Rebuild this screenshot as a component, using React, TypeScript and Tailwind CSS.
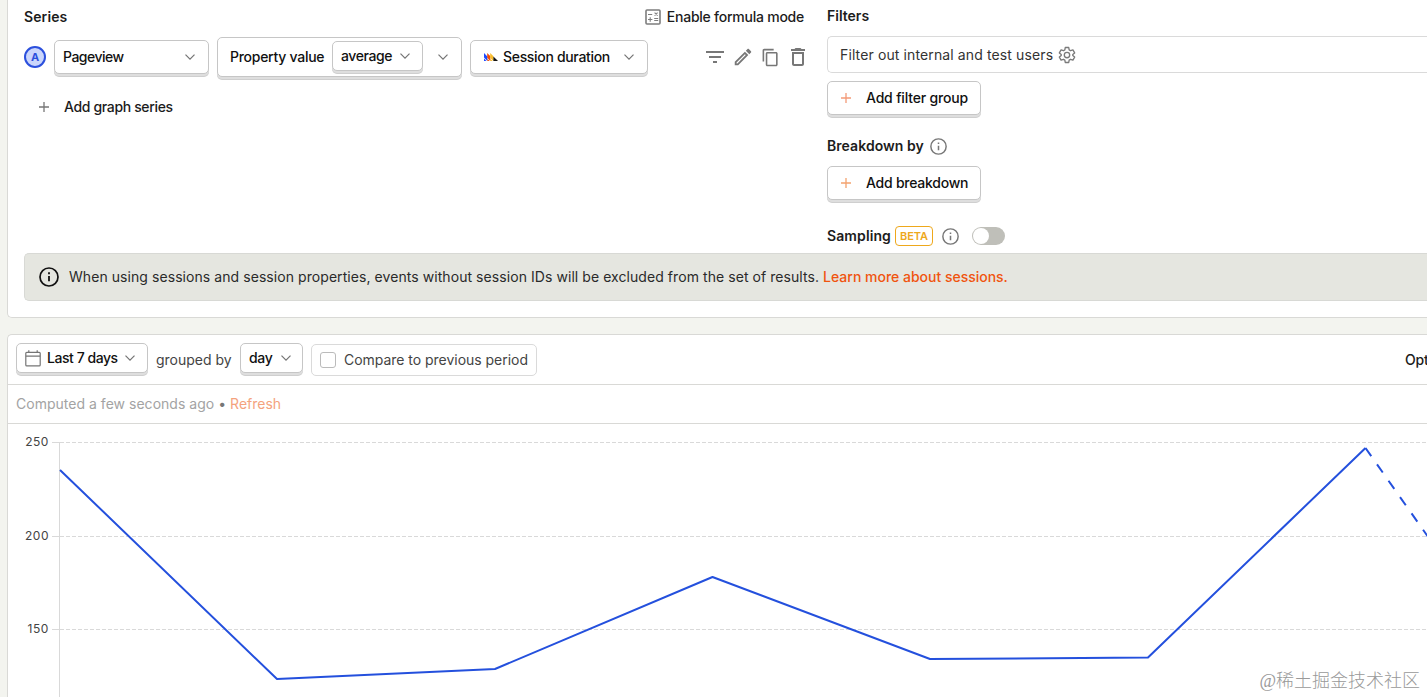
import React from "react";
import {
  MdContentCopy,
  MdFilterList,
  MdOutlineDelete,
  MdOutlineEdit,
} from "react-icons/md";

const POINTS = [
  [52, 46],
  [269, 255],
  [487, 245],
  [704.5, 153],
  [922, 235],
  [1140, 233.5],
  [1357.5, 24],
];

const TICKS = [
  { label: "250", y: 18.5 },
  { label: "200", y: 112.5 },
  { label: "150", y: 205.5 },
];

interface IconProps {
  className?: string;
}

const Chevron: React.FC<IconProps> = ({ className = "" }) => (
  <svg
    viewBox="0 0 10 6"
    className={`w-[10px] h-[6px] shrink-0 ${className}`}
    fill="none"
    stroke="#747474"
    strokeWidth="1.2"
  >
    <path d="M0.5 0.6 5 5.1 9.5 0.6" />
  </svg>
);

const Plus: React.FC<IconProps> = ({ className = "" }) => (
  <svg
    viewBox="0 0 10 10"
    className={`w-[10px] h-[10px] shrink-0 ${className}`}
    fill="none"
    stroke="currentColor"
    strokeWidth="1.3"
  >
    <path d="M5 0V10M0 5H10" />
  </svg>
);

const Info: React.FC<IconProps> = ({ className = "" }) => (
  <svg viewBox="0 0 20 20" className={`shrink-0 ${className}`} fill="none">
    <circle cx="10" cy="10" r="9" stroke="currentColor" strokeWidth="1.7" />
    <path d="M10 9v5.3M10 5.3v1.9" stroke="currentColor" strokeWidth="1.8" />
  </svg>
);

const Calculator = () => (
  <svg
    viewBox="0 0 16 16"
    className="w-4 h-4 shrink-0"
    fill="none"
    stroke="#7d7d7d"
  >
    <rect x="1" y="1" width="14" height="14" rx="1" strokeWidth="1.6" />
    <path
      d="M3 5.5h4.2M9.6 3.7l3 3M12.6 3.7l-3 3M3 10.5h4.4M5.2 8.3v4.4M9.2 9.5h4M9.2 11.5h4"
      strokeWidth="1.1"
    />
  </svg>
);

const Gear = () => (
  <svg
    viewBox="0 0 24 24"
    className="w-[18px] h-[18px] shrink-0"
    fill="none"
    stroke="#7a7a7a"
    strokeWidth="1.8"
    strokeLinejoin="round"
  >
    <path d="M9.7 2h4.6l.6 3.2 1.9 1.1 3.1-1.1 2.3 4-2.5 2.1v1.4l2.5 2.1-2.3 4-3.1-1.1-1.9 1.1-.6 3.2H9.7l-.6-3.2-1.9-1.1-3.1 1.1-2.3-4 2.5-2.1v-1.4L1.8 9.2l2.3-4 3.1 1.1 1.9-1.1z" />
    <circle cx="12" cy="12" r="3.6" />
  </svg>
);

const Calendar = () => (
  <svg
    viewBox="0 0 16 17"
    className="w-4 h-[17px] shrink-0"
    fill="none"
    stroke="#757575"
    strokeWidth="1.2"
  >
    <rect x="0.8" y="2.3" width="14.4" height="13.6" rx="1" />
    <path d="M0.8 6.1h14.4M3.8 0.2v2.4M12.2 0.2v2.4" />
  </svg>
);

const HogLogo = () => (
  <svg viewBox="0 0 14 8" className="w-[14px] h-2 shrink-0">
    <path d="M0 0l3.4 3.4V8L0 4.6zM0 5.6 2.4 8H0z" fill="#1d4aff" />
    <path d="M3.2 0l3.2 3.2V8L3.2 4.8zM3.4 5.8 5.6 8H3.4z" fill="#f54e00" />
    <path d="M6.2 0l3.2 3.2V8L6.2 4.8zM6.4 5.8 8.6 8H6.4z" fill="#f9bd2b" />
    <path d="M9.4 3.4 14 8H9.4z" fill="#151515" />
  </svg>
);

interface ButtonProps {
  className?: string;
  children: React.ReactNode;
}

const Button: React.FC<ButtonProps> = ({ className = "", children }) => (
  <div
    className={`flex items-center shrink-0 bg-white border border-[#c6c6c6] rounded-[5px] font-medium text-[#111] whitespace-nowrap shadow-[0_2px_0_#dedede,0_3px_0_#cfcfcf] ${className}`}
  >
    {children}
  </div>
);

const Series = () => (
  <div className="w-[803px] shrink-0">
    <div className="flex justify-between items-center h-[34px] pr-[23px]">
      <span className="font-semibold tracking-[0.1px]">Series</span>
      <div className="flex items-center gap-[6px] font-medium">
        <Calculator />
        <span className="tracking-[-0.24px]">Enable formula mode</span>
      </div>
    </div>
    <div className="flex items-center h-[46px]">
      <div className="w-[22px] h-[22px] rounded-full border-2 border-[#2c50dd] bg-[#cbd6fb] text-[#2c50dd] text-[11px] font-bold flex items-center justify-center">
        A
      </div>
      <Button className="ml-2 w-[155px] h-[34px] pl-2 pr-[13px] justify-between">
        <span className="tracking-[-0.5px]">Pageview</span>
        <Chevron />
      </Button>
      <Button className="ml-2 w-[245px] h-10 pl-3 pr-[13px]">
        <span className="w-[102px] tracking-[-0.27px]">Property value</span>
        <Button className="w-[91px] h-[30px] pl-2 pr-3 mb-[2px] justify-between">
          <span className="tracking-[-0.4px]">average</span>
          <Chevron className="w-[9px]" />
        </Button>
        <Chevron className="ml-auto" />
      </Button>
      <Button className="ml-2 w-[178px] h-[34px] pl-[13px] pr-[13px]">
        <HogLogo />
        <span className="ml-[5px] tracking-[-0.32px]">Session duration</span>
        <Chevron className="ml-auto" />
      </Button>
      <div className="flex items-center ml-[55px] text-[#777]">
        <MdFilterList size={24} />
        <MdOutlineEdit size={22} className="ml-[5px]" />
        <MdContentCopy size={19} className="ml-[7px]" />
        <MdOutlineDelete size={24} className="ml-[6px]" />
      </div>
    </div>
    <div className="flex items-center gap-[15px] h-[54px] pl-[15px] font-medium">
      <Plus className="text-[#777]" />
      <span className="tracking-[-0.35px]">Add graph series</span>
    </div>
  </div>
);

const Filters = () => (
  <div className="flex-1">
    <div className="h-8 flex items-center font-semibold">Filters</div>
    <div className="mt-1 h-[37px] flex items-center gap-[5px] pl-3 border border-r-0 border-[#dadada] rounded-l-[5px] text-[#333]">
      <span className="tracking-[0.12px]">
        Filter out internal and test users
      </span>
      <Gear />
    </div>
    <Button className="mt-2 w-[154px] h-[34px] pl-[13px] gap-[15px]">
      <Plus className="text-[#f39a78]" />
      <span className="tracking-[-0.18px]">Add filter group</span>
    </Button>
    <div className="mt-5 h-[22px] flex items-center gap-[6px] font-semibold">
      <span className="tracking-[0.06px]">Breakdown by</span>
      <Info className="w-[17px] h-[17px] text-[#777]" />
    </div>
    <Button className="mt-[9px] w-[154px] h-[34px] pl-[13px] gap-[15px]">
      <Plus className="text-[#f3a36f]" />
      <span className="tracking-[-0.24px]">Add breakdown</span>
    </Button>
    <div className="mt-[26px] h-5 flex items-center font-semibold">
      <span className="w-16 tracking-[0.1px]">Sampling</span>
      <span className="ml-1 w-[38px] h-5 flex items-center justify-center border border-[#eea81c] rounded-[4px] text-[#eea81c] text-[11px]">
        BETA
      </span>
      <Info className="ml-[9px] w-[17px] h-[17px] text-[#777]" />
      <div className="ml-[13px] w-[33px] h-[18px] rounded-full bg-[#bfbfb9] p-px flex">
        <div className="w-4 h-4 rounded-full bg-white" />
      </div>
    </div>
  </div>
);

const Chart = () => (
  <svg width="1419" height="273" className="block">
    {TICKS.map(({ label, y }) => (
      <g key={label}>
        <path d={`M44 ${y}H52`} stroke="#d9d9d9" />
        <path d={`M52 ${y}H1419`} stroke="#d9d9d9" strokeDasharray="4 2" />
        <text
          x="41"
          y={y + 3.5}
          textAnchor="end"
          fontSize="12"
          letterSpacing="0.55"
          fill="#444"
        >
          {label}
        </text>
      </g>
    ))}
    <path d="M51.5 18V273" stroke="#d9d9d9" />
    <polyline
      points={POINTS.map((p) => p.join(",")).join(" ")}
      fill="none"
      stroke="#2450dd"
      strokeWidth="2"
      strokeLinejoin="round"
    />
    <path
      d="M1357.5 24 1575 333"
      stroke="#2450dd"
      strokeWidth="2"
      strokeDasharray="10 10"
    />
  </svg>
);

export default function App() {
  return (
    <div className="relative w-[1427px] h-[697px] overflow-hidden bg-[#f3f4ef] pl-[7px] text-[14px] leading-5 text-[#1c1c1c] font-['Inter',sans-serif] whitespace-nowrap">
      <div className="h-[318px] bg-white border-l border-b border-[#d9d9d6] rounded-bl-[5px] pl-4">
        <div className="flex h-[253px]">
          <Series />
          <Filters />
        </div>
        <div className="h-12 flex items-center pl-[14px] bg-[#e5e6e0] border border-r-0 border-[#d8d9d5] rounded-l-[5px] text-[#2a2a2a]">
          <Info className="w-5 h-5 text-[#111] mr-[10px]" />
          <span className="tracking-[0.065px]">
            When using sessions and session properties, events without session
            IDs will be excluded from the set of results.{" "}
            <span className="font-medium tracking-[-0.01px] text-[#f0540f]">
              Learn more about sessions.
            </span>
          </span>
        </div>
      </div>
      <div className="mt-4 h-[363px] bg-white border-l border-t border-[#d9d9d6] rounded-tl-[5px]">
        <div className="h-[50px] flex items-center pl-2 border-b border-[#d9d9d6]">
          <Button className="w-[132px] h-[30px] mb-[3px] pl-2 pr-3">
            <Calendar />
            <span className="ml-[6px] tracking-[-0.45px]">Last 7 days</span>
            <Chevron className="ml-auto w-[9px]" />
          </Button>
          <span className="ml-2 w-[84px] text-[#444]">grouped by</span>
          <Button className="w-[63px] h-[30px] mb-[3px] pl-2 pr-[11px] justify-between">
            <span className="tracking-[-0.3px]">day</span>
            <Chevron className="w-[9px]" />
          </Button>
          <div className="ml-2 w-[226px] h-8 flex items-center gap-2 pl-2 border border-[#dadada] rounded-[5px] text-[#444]">
            <div className="w-4 h-4 border border-[#bbb] rounded-[3px]" />
            <span className="tracking-[-0.03px]">
              Compare to previous period
            </span>
          </div>
          <span className="ml-auto w-[22px] overflow-hidden font-medium tracking-[-0.2px]">
            Options
          </span>
        </div>
        <div className="h-[39px] flex items-center gap-1 pl-2 border-b border-[#d9d9d6] text-[#a3a3a3]">
          <span className="tracking-[0.02px]">
            Computed a few seconds ago
          </span>
          <span className="text-[#777]">•</span>
          <span className="text-[#f4a27d]">Refresh</span>
        </div>
        <Chart />
      </div>
      <div className="absolute right-[7px] bottom-[4px] text-[18px] leading-6 text-[#999] font-['Liberation_Serif','Noto_Sans_CJK_SC',serif] font-light">
        @稀土掘金技术社区
      </div>
    </div>
  );
}
